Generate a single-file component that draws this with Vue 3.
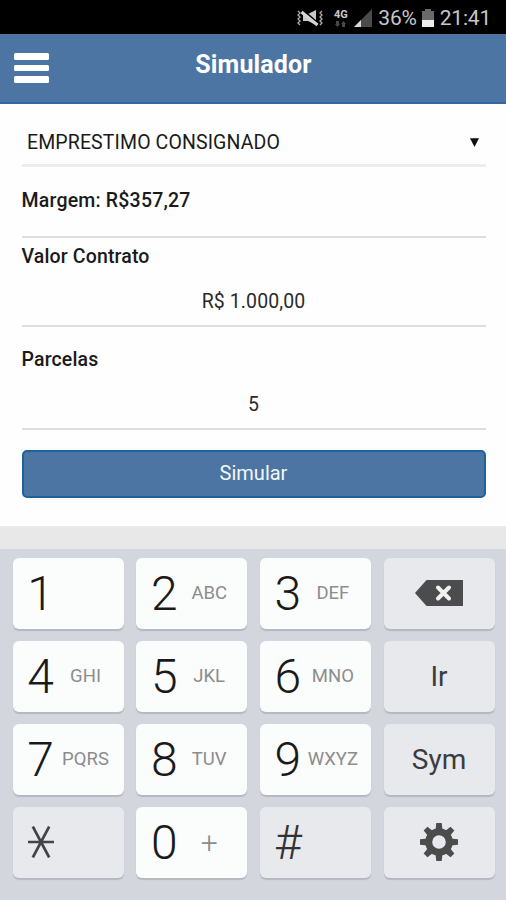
<script setup>
const keys = [
  { main: '1', sub: '' },
  { main: '2', sub: 'ABC' },
  { main: '3', sub: 'DEF' },
  { icon: 'delete' },
  { main: '4', sub: 'GHI' },
  { main: '5', sub: 'JKL' },
  { main: '6', sub: 'MNO' },
  { label: 'Ir' },
  { main: '7', sub: 'PQRS' },
  { main: '8', sub: 'TUV' },
  { main: '9', sub: 'WXYZ' },
  { label: 'Sym' },
  { icon: 'star' },
  { main: '0', sub: '+' },
  { main: '#', sub: '', grey: true },
  { icon: 'gear' },
]
const teeth = [0, 45, 90, 135, 180, 225, 270, 315]
</script>

<template>
  <div class="screen">
    <div class="status">
      <svg class="mute" width="28" height="18" viewBox="0 0 28 18" fill="none">
        <path d="M2 2l2 2-2 2 2 2-2 2 2 2-2 2 2 2M26 2l-2 2 2 2-2 2 2 2-2 2 2 2-2 2" stroke="#aaa" stroke-width="1.3" />
        <path d="M7 5h5l8-4v15l-8-4H7z" fill="#c9c9c9" />
        <path d="M6 1l16 14" stroke="#000" stroke-width="3" />
        <path d="M5.500 3l16 13" stroke="#d6d6d6" stroke-width="3" />
      </svg>
      <span class="net">
        <b>4G</b>
        <svg width="11" height="6" viewBox="0 0 11 6" fill="#484848"><path d="M1 0h3v3h1L2.500 6 0 3h1zM7 6h3V3h1L8.500 0 6 3h1z" /></svg>
      </span>
      <svg class="signal" width="18" height="18" viewBox="0 0 18 18">
        <path d="M0 18L18 0v18z" fill="#4b4b4b" />
        <path d="M0 18L7 11v7z" fill="#d8d8d8" />
      </svg>
      <span class="pct">36%</span>
      <svg class="battery" width="12" height="18" viewBox="0 0 12 18">
        <path d="M3 0h6v2h3v9H0V2h3z" fill="#6a6a6a" />
        <path d="M0 11h12v7H0z" fill="#ededed" />
      </svg>
      <span class="time">21:41</span>
    </div>

    <header class="bar">
      <div class="burger"><i></i><i></i><i></i></div>
      <h1>Simulador</h1>
    </header>

    <main class="form">
      <div class="select">
        <span>EMPRESTIMO CONSIGNADO</span>
        <svg width="9" height="9" viewBox="0 0 9 9"><path d="M0 .3h9L4.500 9z" fill="#111" /></svg>
      </div>
      <div class="margin"><span>Margem: R$357,27</span></div>
      <label class="lbl first">Valor Contrato</label>
      <div class="input"><span class="money">R$ 1.000,00</span></div>
      <label class="lbl second">Parcelas</label>
      <div class="input"><span>5</span></div>
      <button class="submit">Simular</button>
    </main>

    <div class="strip"></div>

    <div class="pad">
      <div v-for="(k, i) in keys" :key="i" class="key" :class="{ grey: !k.main || k.grey, centre: k.label || k.icon }">
        <template v-if="k.main">
          <span class="digit" :class="{ hash: k.grey }">{{ k.main }}</span>
          <span class="sub" :class="{ plus: k.sub === '+' }">{{ k.sub }}</span>
        </template>
        <span v-else-if="k.label" class="word">{{ k.label }}</span>
        <svg v-else-if="k.icon === 'delete'" width="48" height="26" viewBox="0 0 48 26">
          <path d="M0 13L11.500 0H48v26H11.500z" fill="#4c4c4d" />
          <path d="M23 7.500l11 11M34 7.500l-11 11" stroke="#f1f1f3" stroke-width="4" stroke-linecap="round" />
        </svg>
        <div v-else-if="k.icon === 'star'" class="starbox">
          <svg width="26" height="32" viewBox="0 0 26 32">
            <path d="M0 16h26M4.800 .5l16.400 31M21.200 .5L4.800 31.500" stroke="#444446" stroke-width="2.700" />
          </svg>
        </div>
        <svg v-else width="38" height="38" viewBox="-19 -19 38 38">
          <path v-for="t in teeth" :key="t" d="M-3.600-11L-2.700-19h5.400L3.600-11z" :transform="`rotate(${t})`" fill="#4c4c4d" />
          <circle r="10.300" fill="none" stroke="#4c4c4d" stroke-width="7" />
        </svg>
      </div>
    </div>
  </div>
</template>

<style>
body {
  margin: 0;
  background: #d3d7dd;
}
</style>

<style scoped>
.screen {
  width: 506px;
  height: 900px;
  display: flex;
  flex-direction: column;
  overflow: hidden;
  background: #fefefe;
  color: #1a1a1a;
  font-family: Roboto, 'Liberation Sans', sans-serif;
}
.status {
  height: 34px;
  flex: none;
  box-sizing: border-box;
  background: #000;
  color: #c8c8c8;
  display: flex;
  align-items: center;
  justify-content: flex-end;
  padding: 2px 15px 0 0;
  font-size: 21px;
}
.mute {
  margin-right: 9px;
}
.net {
  width: 15px;
  height: 17px;
  display: flex;
  flex-direction: column;
  align-items: center;
  justify-content: space-between;
  margin-right: 6px;
  font-size: 11px;
  line-height: 9px;
}
.signal {
  margin-right: 6px;
}
.pct {
  letter-spacing: -0.2px;
  margin-right: 5px;
}
.battery {
  margin-right: 6px;
}
.time {
  letter-spacing: -0.2px;
}
.bar {
  height: 70px;
  flex: none;
  box-sizing: border-box;
  display: grid;
  grid-template-columns: 48px 1fr 48px;
  background: #4c75a3;
  border-bottom: 2px solid #3267a0;
}
.burger {
  display: flex;
  flex-direction: column;
  gap: 5px;
  padding: 19px 0 0 14px;
}
.burger i {
  width: 35px;
  height: 6.500px;
  border-radius: 1.500px;
  background: #fff;
}
h1 {
  margin: 0;
  padding: 16px 0 0 1px;
  color: #fff;
  font-size: 25px;
  line-height: 30px;
  font-weight: 700;
  letter-spacing: 0.15px;
  text-align: center;
}
.form {
  height: 422px;
  flex: none;
  box-sizing: border-box;
  padding: 13px 20.500px 0 21.500px;
  display: flex;
  flex-direction: column;
  font-size: 19.500px;
}
.select {
  height: 50px;
  box-sizing: border-box;
  border-bottom: 3px solid #ededed;
  display: flex;
  align-items: center;
  justify-content: space-between;
  padding: 4px 7px 0 5.500px;
  letter-spacing: 0.12px;
}
.margin {
  height: 71px;
  box-sizing: border-box;
  border-bottom: 2px solid #dedede;
  font-weight: 500;
  line-height: 23px;
  padding-top: 22px;
  letter-spacing: 0.2px;
}
.lbl {
  display: block;
  font-weight: 500;
  line-height: 23px;
  letter-spacing: 0.15px;
}
.first {
  padding-top: 7px;
}
.second {
  padding-top: 21px;
}
.input {
  height: 59px;
  box-sizing: border-box;
  border-bottom: 2px solid #dedede;
  text-align: center;
  line-height: 23px;
  padding-top: 22px;
  color: #2a2a2a;
}
.money {
  letter-spacing: 0.1px;
}
.submit {
  margin-top: 20px;
  height: 48px;
  box-sizing: border-box;
  border: 2px solid #1e629c;
  border-radius: 5px;
  background: #4c75a3;
  color: #f4f8fc;
  font: 400 20px/23px Roboto, sans-serif;
  padding: 0 0 1px;
}
.strip {
  height: 23px;
  flex: none;
  background: #e8e8e8;
}
.pad {
  flex: 1;
  background: #d3d7dd;
  display: grid;
  grid-template-columns: repeat(4, 111px);
  grid-auto-rows: 71px;
  column-gap: 12.700px;
  row-gap: 12px;
  padding: 8.500px 0 0 12.500px;
}
.key {
  border-radius: 6px;
  background: #fbfcfc;
  box-shadow: 0 2px 1px #b5b9bf;
  display: flex;
  align-items: center;
}
.grey {
  background: #e7e9ed;
}
.centre {
  justify-content: center;
}
.digit {
  width: 56px;
  text-align: center;
  font-size: 48px;
  line-height: 56px;
  font-weight: 300;
  padding-top: 1px;
}
.hash {
  color: #333;
}
.sub {
  width: 34px;
  display: flex;
  justify-content: center;
  font-size: 18.500px;
  font-weight: 400;
  color: #8c8c8c;
}
.plus {
  font-size: 30px;
  font-weight: 300;
}
.word {
  font-size: 28px;
  color: #3c3c3e;
}
.starbox {
  width: 111px;
  box-sizing: border-box;
  padding-left: 15.500px;
  display: flex;
}
</style>
